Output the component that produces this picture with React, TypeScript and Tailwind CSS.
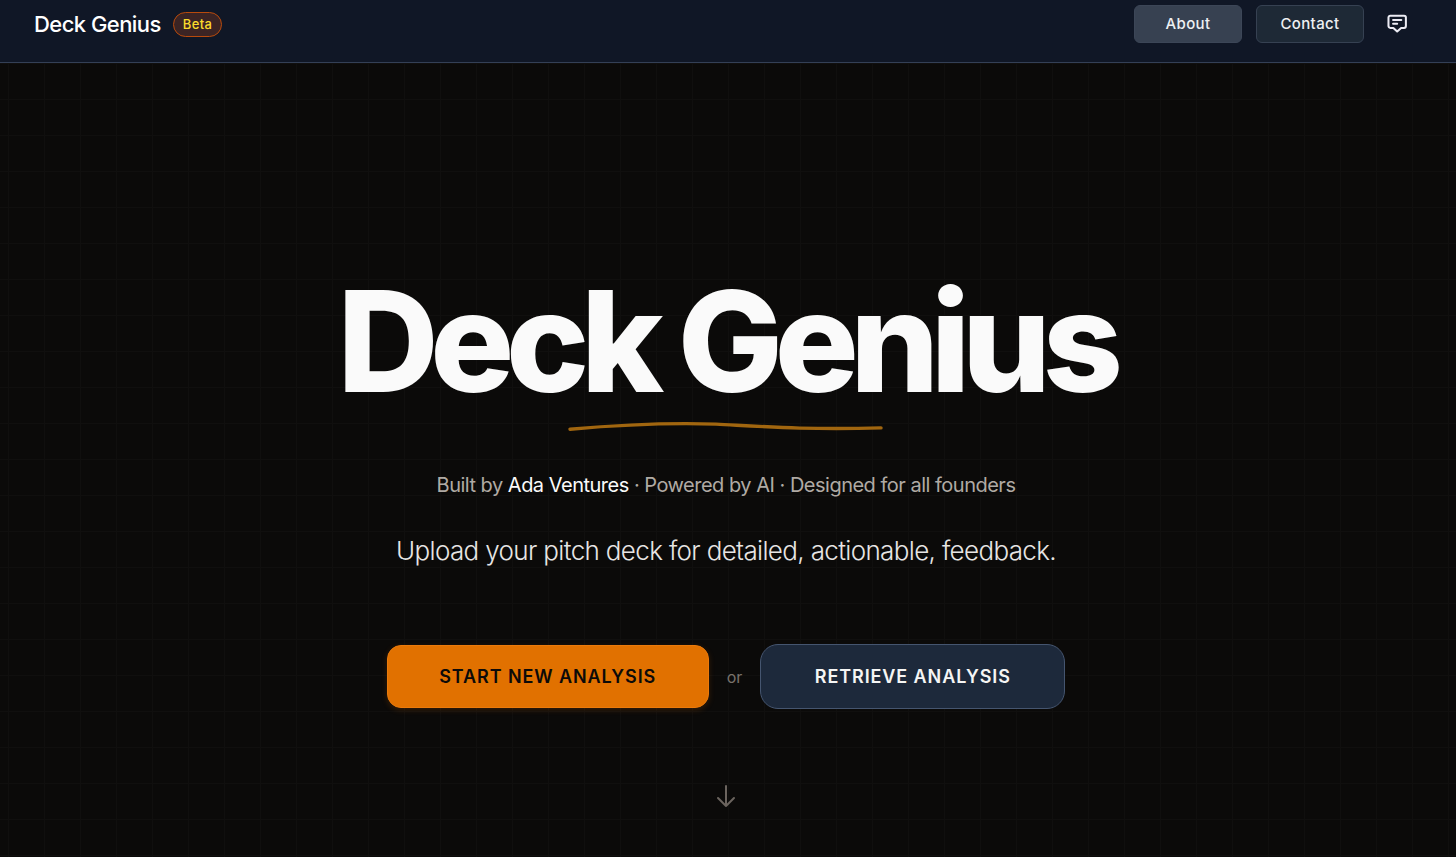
import { useState } from "react";

function FeedbackIcon() {
  return (
    <svg viewBox="0 0 24 24" className="size-[22px]" fill="none" stroke="currentColor" strokeWidth="2.2" strokeLinecap="round" strokeLinejoin="round" aria-hidden="true">
      <path d="M4.7 3h15a2 2 0 0 1 2 2v9.3a2 2 0 0 1-2 2h-3.2L12.2 20.2 8 16.3H4.7a2 2 0 0 1-2-2V5a2 2 0 0 1 2-2z" />
      <path d="M7.7 7.7h9M7.7 11.8h4.5" />
    </svg>
  );
}

function Header({ page, setPage }: { page: string; setPage: (p: string) => void }) {
  return (
    <header className="flex items-center justify-between bg-[#101726] border-b border-[#344056] pl-[34px] pr-10 pt-[5px] pb-[19px]">
      <div className="flex items-center gap-3">
        <a href="#" className="text-[22px] leading-8 font-medium tracking-tight text-white">Deck Genius</a>
        <span className="px-[9px] py-px rounded-full border border-[#b84a0c] bg-[#3b2424] text-[13px] leading-[21px] font-medium tracking-wide text-[#fbdc2c]">
          Beta
        </span>
      </div>
      <nav className="flex items-center gap-[14px]">
        {["About", "Contact"].map((label) => (
          <button
            key={label}
            onClick={() => setPage(label)}
            className={
              "w-[108px] h-[38px] rounded-md border text-[15px] font-medium tracking-wide text-[#eef0f3] " +
              (page === label ? "bg-[#374151] border-[#3c4657]" : "bg-[#1e2936] border-[#364152]")
            }
          >
            {label}
          </button>
        ))}
        <button aria-label="Feedback" className="flex items-center justify-center size-[38px] text-[#ececf4]">
          <FeedbackIcon />
        </button>
      </nav>
    </header>
  );
}

export default function App() {
  const [page, setPage] = useState("About");

  return (
    <div className="min-h-screen flex flex-col bg-[#0b0a09] font-['Inter',sans-serif] antialiased">
      <Header page={page} setPage={setPage} />
      <main className="flex-1 flex flex-col items-center pt-[206px] pb-12 pr-1 bg-[linear-gradient(to_right,#100f0e_1px,transparent_1px),linear-gradient(to_bottom,#100f0e_1px,transparent_1px)] bg-[size:36px_36px] bg-[position:8px_0px]">
        <h1 className="text-[140px] leading-[144px] font-extrabold tracking-[-0.06em] text-[#fafafa]">Deck Genius</h1>
        <svg viewBox="0 0 316 12" className="w-[316px] h-3 mt-2" fill="none" aria-hidden="true">
          <path d="M2 8.2C56 3.4 106 1.8 148 3.1C196 5.6 238 9 313 6.9" stroke="#a1660f" strokeWidth="3.4" strokeLinecap="round" />
        </svg>
        <p className="mt-9 text-xl leading-8 tracking-tight text-[#b0aaa4]">
          Built by <a href="#ada" className="text-[#fafafa]">Ada Ventures</a> · Powered by AI · Designed for all founders
        </p>
        <p className="mt-8 text-[26px] leading-9 font-light tracking-tight text-[#e7e5e4]">
          Upload your pitch deck for detailed, actionable, feedback.
        </p>
        <div className="mt-[75px] flex items-center gap-[18px]">
          <button className="w-[322px] h-[63px] rounded-[14px] bg-[#e17100] border border-[#eb7a0b] shadow-[0_2px_6px_#e1710030] text-lg font-semibold tracking-wider text-[#0c0a09]">
            START NEW ANALYSIS
          </button>
          <span className="text-base text-[#79716b]">or</span>
          <button className="w-[305px] h-[65px] rounded-[18px] bg-[#1d293b] border border-[#45556f] text-lg font-semibold tracking-wider text-[#f5f5f4]">
            RETRIEVE ANALYSIS
          </button>
        </div>
        <svg viewBox="0 0 24 26" className="w-6 h-[26px] mt-[74px] text-[#6b645e]" fill="none" stroke="currentColor" strokeWidth="2" strokeLinecap="round" strokeLinejoin="round" aria-hidden="true">
          <path d="M12 3v20M4 15l8 8 8-8" />
        </svg>
      </main>
    </div>
  );
}
